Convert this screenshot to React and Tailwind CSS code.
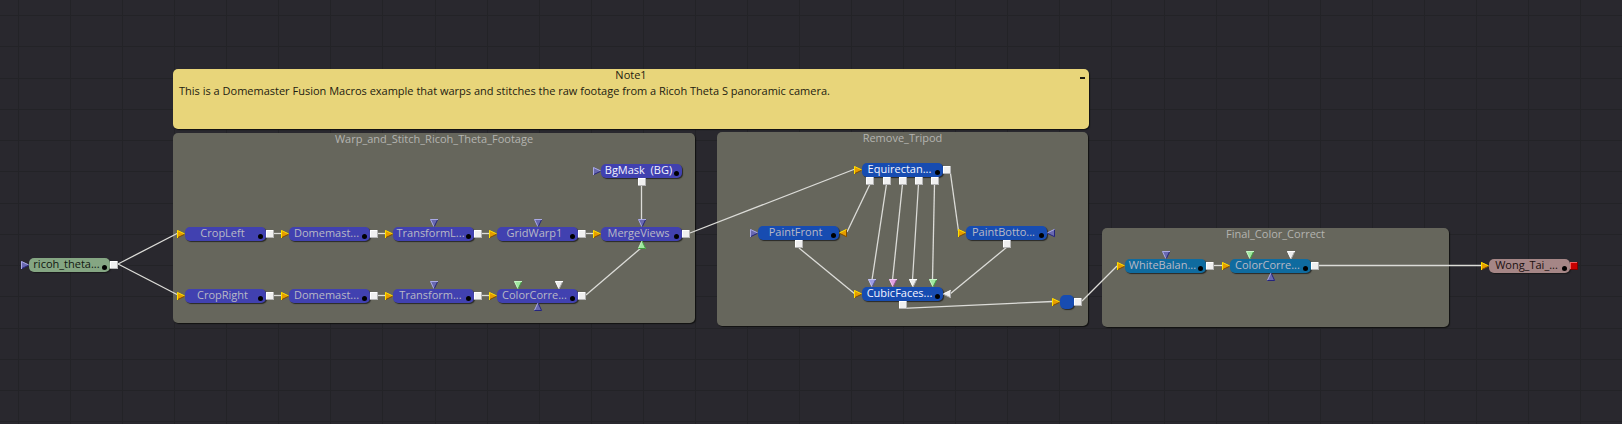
const FONT = "font-['Open_Sans',sans-serif]";

const GRID_X = Array.from({ length: 31 }, (_, i) => Math.round(18 + i * 52.07));
const GRID_Y = Array.from({ length: 14 }, (_, i) => Math.round(15 + i * 31.25));

const GROUPS = [
  { title: 'Warp_and_Stitch_Ricoh_Theta_Footage', x: 173, y: 133, w: 522, h: 190 },
  { title: 'Remove_Tripod', x: 717, y: 132, w: 371, h: 194 },
  { title: 'Final_Color_Correct', x: 1102, y: 228, w: 347, h: 99 },
];

const INDIGO = 'bg-[#4141b0]';
const BLUE = 'bg-[#174cb1]';
const TEAL = 'bg-[#0f6b9f]';
const DIM = 'text-[#b9b9c6]';

const NODES = [
  { label: 'ricoh_theta...', x: 29, y: 258, bg: 'bg-[#85a683]', fg: 'text-[#10160f]' },
  { label: 'CropLeft', x: 185, y: 227, bg: INDIGO, fg: DIM },
  { label: 'Domemast...', x: 289, y: 227, bg: INDIGO, fg: DIM },
  { label: 'TransformL...', x: 393, y: 227, bg: INDIGO, fg: DIM },
  { label: 'GridWarp1', x: 497, y: 227, bg: INDIGO, fg: DIM },
  { label: 'MergeViews', x: 601, y: 227, bg: INDIGO, fg: DIM },
  { label: 'CropRight', x: 185, y: 289, bg: INDIGO, fg: DIM },
  { label: 'Domemast...', x: 289, y: 289, bg: INDIGO, fg: DIM },
  { label: 'Transform...', x: 393, y: 289, bg: INDIGO, fg: DIM },
  { label: 'ColorCorre...', x: 497, y: 289, bg: INDIGO, fg: DIM },
  { label: 'BgMask  (BG)', x: 601, y: 164, bg: INDIGO, fg: 'text-[#f4f4ff]' },
  { label: 'Equirectan...', x: 862, y: 163, bg: BLUE, fg: 'text-[#f4f4ff]' },
  { label: 'PaintFront', x: 758, y: 226, bg: BLUE, fg: DIM },
  { label: 'PaintBotto...', x: 966, y: 226, bg: BLUE, fg: DIM },
  { label: 'CubicFaces...', x: 862, y: 287, bg: BLUE, fg: 'text-[#f4f4ff]' },
  { label: 'WhiteBalan...', x: 1125, y: 259, bg: TEAL, fg: DIM },
  { label: 'ColorCorre...', x: 1230, y: 259, bg: TEAL, fg: DIM },
  { label: 'Wong_Tai_...', x: 1489, y: 259, bg: 'bg-[#a58686]', fg: 'text-[#1a1010]' },
];

const WIRES = [
  [118, 264, 178, 233], [118, 264, 178, 295],
  [274, 233.5, 282, 233.5], [378, 233.5, 386, 233.5], [482, 233.5, 490, 233.5], [586, 233.5, 594, 233.5],
  [274, 295.5, 282, 295.5], [378, 295.5, 386, 295.5], [482, 295.5, 490, 295.5],
  [586, 295, 641, 248], [641.5, 186, 641.5, 220], [690, 233, 855, 169],
  [870, 184, 847, 232], [886.5, 184, 872, 280], [902.5, 184, 892.5, 280], [918.5, 184, 912.5, 280], [934.5, 184, 932.5, 280],
  [950, 170, 958.5, 231], [799, 248, 855, 294], [1007, 247, 950, 294],
  [903, 308.3, 1053, 301.5], [1082, 301, 1117, 266],
  [1214, 265.5, 1223, 265.5], [1319, 265.5, 1482, 265.5],
];

const TONES = {
  gold: ['#e69c00', '#ffe000', '#7d4a00'],
  violet: ['#6868b0', '#aaaae6', '#24247c'],
  lilac: ['#9c9ce4', '#c4c4f4', '#54549c'],
  green: ['#a0e8a0', '#c8f8c8', '#3f9a3f'],
  white: ['#ececec', '#ffffff', '#a8a8a8'],
  pink: ['#e0a0e0', '#f4c8f4', '#8c4c8c'],
};

// dir, tone, left, top of the 8x8 arrow box
const ARROWS = [
  ['r', 'violet', 21, 261],
  ['r', 'gold', 177, 230], ['r', 'gold', 281, 230], ['r', 'gold', 385, 230], ['r', 'gold', 489, 230], ['r', 'gold', 593, 230],
  ['r', 'gold', 177, 292], ['r', 'gold', 281, 292], ['r', 'gold', 385, 292], ['r', 'gold', 489, 292],
  ['r', 'violet', 593, 167],
  ['d', 'violet', 430, 219], ['d', 'violet', 430, 281], ['d', 'violet', 534, 219], ['d', 'violet', 638, 219],
  ['u', 'green', 638, 241], ['d', 'green', 514, 281], ['d', 'white', 555, 281], ['u', 'violet', 534, 303],
  ['r', 'gold', 854, 166], ['l', 'gold', 839, 229], ['r', 'violet', 750, 229], ['r', 'gold', 854, 290],
  ['d', 'lilac', 868, 279], ['d', 'pink', 889, 279], ['d', 'white', 909, 279], ['d', 'green', 929, 279],
  ['l', 'white', 943, 290], ['r', 'gold', 958, 229], ['l', 'violet', 1047, 229], ['r', 'gold', 1052, 298],
  ['r', 'gold', 1117, 262], ['d', 'violet', 1162, 251], ['r', 'gold', 1222, 262],
  ['d', 'green', 1246, 251], ['d', 'white', 1287, 251], ['u', 'violet', 1267, 273],
  ['r', 'gold', 1481, 262],
];

// left, top of the 8x8 output squares
const OUTPUTS = [
  [110, 261],
  [266, 230], [370, 230], [474, 230], [578, 230], [682, 230],
  [266, 292], [370, 292], [474, 292], [578, 292],
  [638, 178],
  [943, 166], [866, 177], [883, 177], [899, 177], [915, 177], [931, 177],
  [795, 240], [1003, 240], [899, 301], [1074, 298],
  [1206, 262], [1311, 262],
];

function Grid() {
  return (
    <g shapeRendering="crispEdges" fill="#232327">
      {GRID_X.map((x) => <rect key={x} x={x} y="0" width="1" height="424" />)}
      {GRID_Y.map((y) => <rect key={y} x="0" y={y} width="1622" height="1" />)}
    </g>
  );
}

function Arrow({ dir, tone, x, y }) {
  const [fill, light, dark] = TONES[tone];
  const shapes = {
    r: <><path d="M0 0L8 4L0 8Z" fill={fill} /><path d="M0.5 7.7L7.8 4.2" stroke={dark} /><path d="M0.5 8V0.5L7.5 3.8" stroke={light} /></>,
    l: <><path d="M8 0L0 4L8 8Z" fill={fill} /><path d="M0.2 4.2L7.5 7.7V0.5" stroke={dark} /><path d="M0.5 3.8L7.5 0.4" stroke={light} /></>,
    d: <><path d="M0 0H8L4 8Z" fill={fill} /><path d="M7.7 0.5L4.2 7.8" stroke={dark} /><path d="M3.8 7.5L0.5 0.5H8" stroke={light} /></>,
    u: <><path d="M4 0L0 8H8Z" fill={fill} /><path d="M4.2 0.2L7.6 7.5H0.2" stroke={dark} /><path d="M0.5 7.2L3.8 0.2" stroke={light} /></>,
  };
  return <g transform={`translate(${x} ${y})`} fill="none" strokeWidth="1">{shapes[dir]}</g>;
}

function Port({ x, y, red }) {
  return (
    <g transform={`translate(${x} ${y})`} shapeRendering="crispEdges">
      <rect width="8" height="8" fill={red ? '#7c0000' : '#b4b4b4'} />
      <rect width="7" height="7" fill={red ? '#f06060' : '#ffffff'} />
      <rect x="1" y="1" width="6" height="6" fill={red ? '#c80000' : '#f0f0f0'} />
    </g>
  );
}

function Node({ label, x, y, bg, fg }) {
  return (
    <div
      className={`absolute flex h-3.5 w-[81px] items-start justify-center rounded-[5px] pr-1.5 shadow-[1px_1px_1px_rgba(20,20,20,0.75)] ${bg} ${fg}`}
      style={{ left: x, top: y }}
    >
      <span className="whitespace-pre text-[11px] leading-[11px]">{label}</span>
      <span className="absolute right-[3px] bottom-[2px] size-[5px] rounded-full bg-black" />
    </div>
  );
}

export default function App() {
  return (
    <main className={`relative h-[424px] w-full overflow-hidden bg-[#29282e] ${FONT}`}>
      <svg className="absolute inset-0" width="1622" height="424"><Grid /></svg>

      <section className="absolute top-[69px] left-[173px] flex h-[60px] w-[916px] flex-col gap-[5px] rounded-[5px] bg-[#e8d57a] text-[11px] leading-[11px] text-[#1d1b10] shadow-[1px_1px_1px_#111]">
        <h2 className="text-center">Note1</h2>
        <p className="pl-1.5 whitespace-nowrap">
          This is a Domemaster Fusion Macros example that warps and stitches the raw footage from a Ricoh Theta S panoramic camera.
        </p>
        <span className="absolute top-2 right-1 h-0.5 w-[5px] bg-[#1d1b10]" />
      </section>

      {GROUPS.map((g) => (
        <section
          key={g.title}
          className="absolute rounded-[5px] bg-[#66665c] text-center text-[11px] leading-[11px] text-[#b4b4b0] shadow-[1px_1px_1px_#111]"
          style={{ left: g.x, top: g.y, width: g.w, height: g.h }}
        >
          <h3>{g.title}</h3>
        </section>
      ))}

      <svg className="absolute inset-0" width="1622" height="424" stroke="#dcdcd8" strokeWidth="1.3">
        {WIRES.map(([x1, y1, x2, y2], i) => <line key={i} x1={x1} y1={y1} x2={x2} y2={y2} />)}
      </svg>

      {NODES.map((n, i) => <Node key={i} {...n} />)}
      <div className="absolute top-[295px] left-[1060px] h-3.5 w-3.5 rounded-[5px] bg-[#174cb1] shadow-[1px_1px_1px_rgba(20,20,20,0.75)]" />

      <svg className="absolute inset-0" width="1622" height="424">
        {ARROWS.map(([dir, tone, x, y], i) => <Arrow key={i} dir={dir} tone={tone} x={x} y={y} />)}
        {OUTPUTS.map(([x, y], i) => <Port key={i} x={x} y={y} />)}
        <Port x={1570} y={262} red />
      </svg>
    </main>
  );
}
